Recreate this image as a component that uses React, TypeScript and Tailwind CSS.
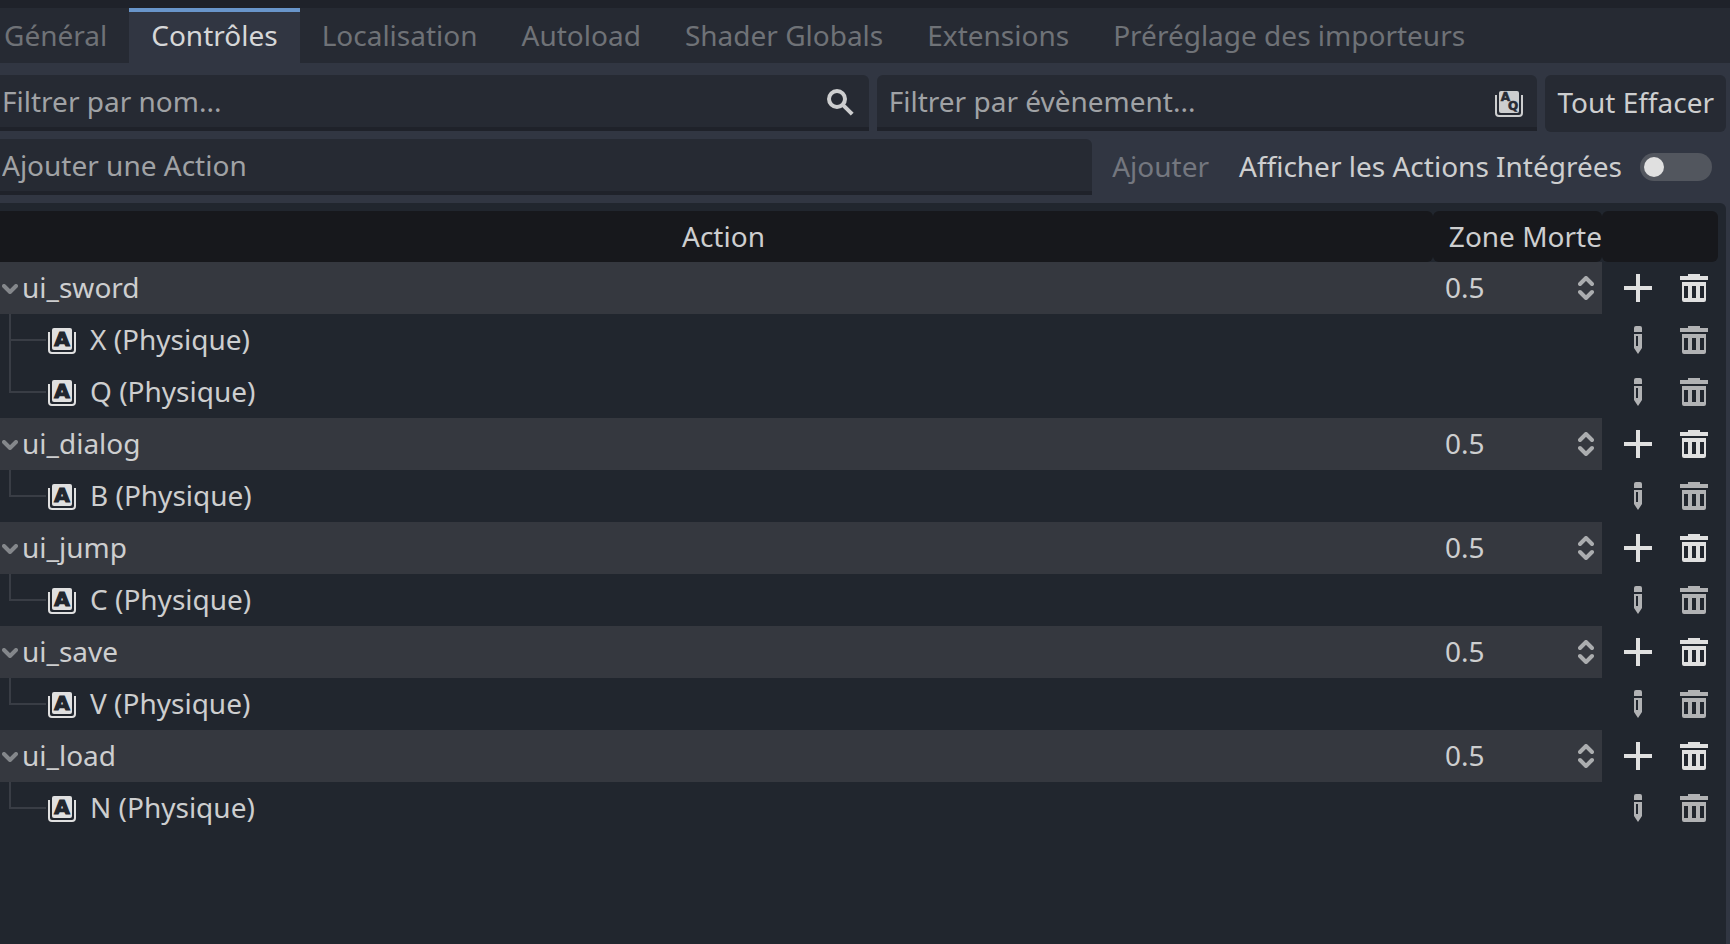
import { useState } from "react";

const TABS = [
  "Général",
  "Contrôles",
  "Localisation",
  "Autoload",
  "Shader Globals",
  "Extensions",
  "Préréglage des importeurs",
];

type Action = { name: string; deadzone: string; events: string[] };

const ACTIONS: Action[] = [
  { name: "ui_sword", deadzone: "0.5", events: ["X (Physique)", "Q (Physique)"] },
  { name: "ui_dialog", deadzone: "0.5", events: ["B (Physique)"] },
  { name: "ui_jump", deadzone: "0.5", events: ["C (Physique)"] },
  { name: "ui_save", deadzone: "0.5", events: ["V (Physique)"] },
  { name: "ui_load", deadzone: "0.5", events: ["N (Physique)"] },
];

function SearchIcon() {
  return (
    <svg className="mt-1 size-8 shrink-0 text-[#cdcecf]" viewBox="0 0 16 16" fill="none" stroke="currentColor" aria-hidden="true">
      <circle cx="6" cy="6" r="4" strokeWidth="2" />
      <path d="M8.8 8.8 13.6 13.6" strokeWidth="2" />
    </svg>
  );
}

function KeyFrame() {
  return (
    <>
      <rect x="3" y="2" width="10" height="11" rx="1" fill="currentColor" />
      <path d="M1.5 4v9a1.5 1.5 0 0 0 1.5 1.5h10a1.5 1.5 0 0 0 1.5-1.5V4" fill="none" stroke="currentColor" />
    </>
  );
}

function KeyIcon() {
  return (
    <svg className="size-8 shrink-0 text-[#e0e0e0]" viewBox="0 0 16 16" aria-hidden="true">
      <KeyFrame />
      <text x="8" y="11" textAnchor="middle" strokeWidth="0.6" className="fill-[#21262e] stroke-[#21262e] font-['DejaVu_Sans'] text-[10px] font-bold">A</text>
    </svg>
  );
}

function ShortcutIcon() {
  return (
    <svg className="mt-1 size-8 shrink-0 text-[#cdcecf]" viewBox="0 0 16 16" aria-hidden="true">
      <KeyFrame />
      <g textAnchor="middle" strokeWidth="0.3" className="fill-[#262a33] stroke-[#262a33] font-['DejaVu_Sans'] text-[6px] font-bold">
        <text x="6.2" y="6.9">A</text>
        <text x="10" y="11.3">Q</text>
      </g>
    </svg>
  );
}

function PlusIcon() {
  return (
    <svg className="size-8" viewBox="0 0 16 16" fill="currentColor" aria-hidden="true">
      <path d="M7 1h2v6h6v2H9v6H7V9H1V7h6z" />
    </svg>
  );
}

function TrashIcon() {
  return (
    <svg className="size-8" viewBox="0 0 16 16" fill="currentColor" fillRule="evenodd" aria-hidden="true">
      <path d="M5 1h6v1h4v2H1V2h4zM2 5h12v9a1 1 0 0 1-1 1H3a1 1 0 0 1-1-1zm1 2v6h2V7zm4 0v6h2V7zm4 0v6h2V7z" />
    </svg>
  );
}

function PencilIcon() {
  return (
    <svg className="size-8" viewBox="0 0 16 16" fill="currentColor" fillRule="evenodd" aria-hidden="true">
      <path d="M7 1h2a1 1 0 0 1 1 1v2H6V2a1 1 0 0 1 1-1zM6 5h4v7l-2 3-2-3zm1 1v5h1V6z" />
    </svg>
  );
}

function Chevron() {
  return (
    <svg className="mt-[2px] h-[10px] w-4" viewBox="0 0 16 10" fill="none" stroke="currentColor" strokeWidth="4" strokeLinecap="round" strokeLinejoin="round" aria-hidden="true">
      <path d="M2 2 8 8 14 2" />
    </svg>
  );
}

function SpinIcon() {
  return (
    <svg className="h-6 w-4" viewBox="0 0 16 24" fill="none" stroke="currentColor" strokeWidth="4" strokeLinecap="round" strokeLinejoin="round" aria-hidden="true">
      <path d="M2 8 8 2 14 8M2 16 8 22 14 16" />
    </svg>
  );
}

function ActionRows({ action }: { action: Action }) {
  const [open, setOpen] = useState(true);
  return (
    <>
      <tr className="h-[52px]">
        <td className="bg-[#35383f] p-0">
          <div className="flex items-center gap-1 pl-[2px]">
            <button type="button" aria-label={`Replier ${action.name}`} aria-expanded={open} onClick={() => setOpen(!open)} className="text-[#84878b]">
              <Chevron />
            </button>
            <span className="pb-[2px]">{action.name}</span>
          </div>
        </td>
        <td className="bg-[#35383f] p-0">
          <div className="flex items-center pr-2 pl-3">
            <input aria-label={`Zone morte de ${action.name}`} defaultValue={action.deadzone} className="min-w-0 flex-1 bg-transparent pb-[2px] outline-none" />
            <button type="button" aria-label={`Ajuster la zone morte de ${action.name}`} className="text-[#abadaf]">
              <SpinIcon />
            </button>
          </div>
        </td>
        <td className="p-0">
          <div className="flex items-center gap-6 pl-5 text-[#e0e0e0]">
            <button type="button" aria-label={`Ajouter un évènement à ${action.name}`}><PlusIcon /></button>
            <button type="button" aria-label={`Supprimer ${action.name}`}><TrashIcon /></button>
          </div>
        </td>
      </tr>
      {open &&
        action.events.map((event, i) => (
          <tr key={event} className="h-[52px]">
            <td colSpan={2} className="p-0">
              <div className="flex h-[52px] items-center pl-[9px]">
                <span className="flex w-[37px] shrink-0 flex-col self-stretch" aria-hidden="true">
                  <span className="h-[27px] border-b-2 border-l-2 border-[#393d45]" />
                  {i < action.events.length - 1 && <span className="flex-1 border-l-2 border-[#393d45]" />}
                </span>
                <KeyIcon />
                <span className="pb-[2px] pl-3">{event}</span>
              </div>
            </td>
            <td className="p-0">
              <div className="flex items-center gap-6 pl-5 text-[#b1b2b4]">
                <button type="button" aria-label={`Modifier ${event}`}><PencilIcon /></button>
                <button type="button" aria-label={`Supprimer ${event}`}><TrashIcon /></button>
              </div>
            </td>
          </tr>
        ))}
    </>
  );
}

export default function App() {
  const [tab, setTab] = useState("Contrôles");
  return (
    <main className="flex min-h-screen flex-col bg-[#313642] font-['Noto_Sans',sans-serif] text-[28px] leading-10 text-[#cdcecf] [&_button]:block">
      <div role="tablist" className="flex border-t-8 border-[#1f222a] bg-[#262a33]">
        {TABS.map((name) => (
          <button
            key={name}
            type="button"
            role="tab"
            aria-selected={name === tab}
            onClick={() => setTab(name)}
            className="h-[55px] border-t-4 border-transparent px-[22px] pb-[6px] whitespace-nowrap text-[#6f7277] first:pl-1 aria-selected:border-[#6996cb] aria-selected:bg-[#313642] aria-selected:text-[#d6d7d8]"
          >
            {name}
          </button>
        ))}
      </div>

      <div className="flex gap-2 pt-3 pr-1">
        <div className="flex h-14 grow basis-[232px] items-center rounded-tr-md border-b-4 border-[#1f222a] bg-[#262a33] pr-3 pl-[2px]">
          <input aria-label="Filtrer par nom" placeholder="Filtrer par nom..." className="min-w-0 flex-1 outline-none placeholder:text-[#a0a2a5]" />
          <SearchIcon />
        </div>
        <div className="flex h-14 grow basis-0 items-center rounded-t-md border-b-4 border-[#1f222a] bg-[#262a33] pr-3 pl-3">
          <input aria-label="Filtrer par évènement" placeholder="Filtrer par évènement..." className="min-w-0 flex-1 outline-none placeholder:text-[#a0a2a5]" />
          <ShortcutIcon />
        </div>
        <button type="button" className="h-[57px] rounded-md bg-[#262a33] px-3 pb-[3px] whitespace-nowrap">Tout Effacer</button>
      </div>

      <div className="flex items-center pt-[7px] pr-[18px]">
        <input aria-label="Ajouter une Action" placeholder="Ajouter une Action" className="h-14 min-w-0 flex-1 rounded-tr-md border-b-4 border-[#1f222a] bg-[#262a33] pl-[2px] outline-none placeholder:text-[#a0a2a5]" />
        <button type="button" disabled className="pr-[30px] pb-[2px] pl-5 text-[#74777f]">Ajouter</button>
        <label htmlFor="builtin" className="pr-[18px] pb-[2px] whitespace-nowrap">Afficher les Actions Intégrées</label>
        <input
          id="builtin"
          type="checkbox"
          className="flex h-7 w-[72px] shrink-0 appearance-none items-center rounded-full bg-[#52565e] px-1 before:size-5 before:rounded-full before:bg-[#e0e0e0] before:content-[''] checked:justify-end"
        />
      </div>

      <div className="mt-2 mr-1 flex-1 rounded-tr-md bg-[#21262e] pt-2 pr-2">
        <table className="w-full table-fixed border-collapse">
          <colgroup>
            <col />
            <col className="w-[169px]" />
            <col className="w-[116px]" />
          </colgroup>
          <thead>
            <tr className="h-[51px]">
              <th scope="col" className="rounded-r-md bg-[#17181c] p-0 pb-[2px] pl-[14px] font-normal">Action</th>
              <th scope="col" className="rounded-md bg-[#17181c] p-0 pb-[2px] text-right font-normal whitespace-nowrap">Zone Morte</th>
              <th scope="col" aria-label="Commandes" className="rounded-md bg-[#17181c] p-0" />
            </tr>
          </thead>
          <tbody>
            {ACTIONS.map((action) => (
              <ActionRows key={action.name} action={action} />
            ))}
          </tbody>
        </table>
      </div>
    </main>
  );
}
